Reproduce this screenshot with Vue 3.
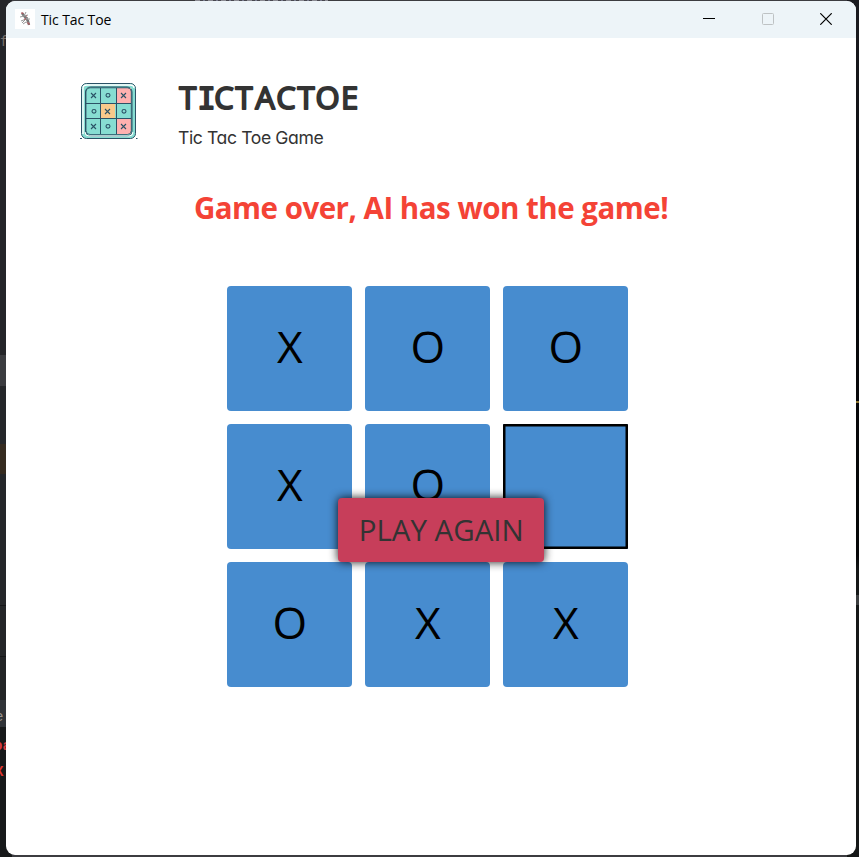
<script setup>
const cells = ['X', 'O', 'O', 'X', 'O', '', 'O', 'X', 'X']
const editorBands = [
  { h: 355, c: '#242529' }, { h: 31, c: '#3b3c40' }, { h: 58, c: '#25272a' },
  { h: 30, c: '#352b20' }, { h: 131, c: '#25272a' }, { h: 1, c: '#151618' },
  { h: 50, c: '#242628' }, { h: 1, c: '#151618' }, { h: 43, c: '#222426' },
  { h: 27, c: '#303338' }, { h: 130, c: '#17191a' },
]
const tiles = [
  { x: 17, y: 18, c: '#87ddd2', m: 'x' }, { x: 31, y: 18, c: '#87ddd2', m: 'o' }, { x: 47, y: 18, c: '#ffb1b0', m: 'x' },
  { x: 17, y: 34, c: '#87ddd2', m: 'o' }, { x: 31, y: 34, c: '#f9c98b', m: 'x' }, { x: 47, y: 34, c: '#87ddd2', m: 'o' },
  { x: 17, y: 49, c: '#87ddd2', m: 'x' }, { x: 31, y: 49, c: '#87ddd2', m: 'o' }, { x: 47, y: 49, c: '#ffb1b0', m: 'x' },
]
</script>

<template>
  <div class="desktop">
    <div class="editor">
      <div v-for="(b, i) in editorBands" :key="i" :style="{ height: b.h + 'px', background: b.c }"></div>
      <span class="code f">f</span>
      <span class="code e">e</span>
      <span class="code a">oa</span>
      <span class="code x">X</span>
    </div>
    <div class="editor-right">
      <i class="scroll"></i>
      <i class="squiggle"></i>
    </div>
    <i class="code-sliver"></i>
    <div class="window">
      <header class="titlebar">
        <svg class="app-icon" width="20" height="20" viewBox="0 0 20 20">
          <rect width="20" height="20" fill="#fff" />
          <path d="M7 4l2 3 2 2 2 3 1 4" stroke="#777" stroke-width="2.4" fill="none" />
          <path d="M5 8l4-1 4-1M6 12l5-2 4 0M8 15l3-2 3 1M11 3l-2 4M7 14l6-6" stroke="#999" stroke-width="1" fill="none" />
          <path d="M6 4h2v1M9 10h2M12 14h2v2M11 7h1" stroke="#b5555a" stroke-width="1" fill="none" />
        </svg>
        <span class="caption">Tic Tac Toe</span>
        <div class="controls">
          <svg width="12" height="12" viewBox="0 0 12 12"><path d="M0 5.5h12" stroke="#000" /></svg>
          <svg width="12" height="12" viewBox="0 0 12 12"><rect x=".5" y=".5" width="11" height="11" rx="1" fill="none" stroke="#bec2c4" /></svg>
          <svg width="12" height="12" viewBox="0 0 12 12"><path d="M.3.3l11.4 11.4M11.7.3L.3 11.7" stroke="#000" stroke-width="1.2" /></svg>
        </div>
      </header>

      <section class="brand">
        <svg class="logo" width="58" height="58" viewBox="10 12 58 58">
          <path d="M10 68.5h2M66 68.5h1.5" stroke="#2b5266" />
          <rect x="11.5" y="13.5" width="54" height="55" rx="5" fill="#87ddd2" stroke="#2b5266" />
          <path d="M13 64V18q0-3 4-3h43q4 0 4 3" fill="none" stroke="#fff" stroke-width="1.4" />
          <rect x="15.5" y="17" width="46.5" height="49" rx="5" fill="#87ddd2" stroke="#2b5266" />
          <path d="M15 62q0 4 4 4h40q4 0 4-4" fill="none" stroke="#fff" />
          <g v-for="(t, i) in tiles" :key="i" :transform="`translate(${t.x} ${t.y})`">
            <rect width="14" height="15" :fill="t.c" />
            <path v-if="t.m === 'x'" d="M4 5l5 5M9 5l-5 5" stroke="#2b5266" stroke-width="1.1" />
            <ellipse v-else cx="7" cy="7.3" rx="2" ry="1.8" fill="none" stroke="#2b5266" stroke-width="1.1" />
          </g>
          <path d="M30.5 18v46M46.5 18v46M16 33.5h45M16 48.5h45" stroke="#2b5266" />
          <rect x="16" y="17.8" width="45.3" height="46.7" rx="4" fill="none" stroke="#2b5266" stroke-width=".8" />
        </svg>
        <div>
          <h1>
            <svg width="184" height="34" viewBox="0 0 184 34">
              <text x="9.7 28.6 46 66 87 108 128 149.5 171.5" y="27" text-anchor="middle">T<tspan class="serifed">I</tspan>CTACTOE</text>
            </svg>
          </h1>
          <p>Tic Tac Toe Game</p>
        </div>
      </section>

      <div class="status"><span>Game over, AI has won the game!</span></div>

      <main class="board">
        <button v-for="(cell, i) in cells" :key="i" class="cell" :class="{ focused: i === 5 }">{{ cell }}</button>
        <button class="again"><span>PLAY AGAIN</span></button>
      </main>
    </div>
  </div>
</template>

<style>
body { overflow: hidden; }
</style>

<style scoped>
* { box-sizing: border-box; }
.desktop {
  position: relative;
  width: 859px;
  height: 857px;
  padding: 1px 3px 2px 6px;
  background: #3c3c40;
  overflow: hidden;
  font-family: "Segoe UI", "Open Sans", sans-serif;
}
.editor { position: absolute; left: 0; top: 0; width: 12px; height: 857px; }
.editor-right { position: absolute; right: 0; top: 0; width: 12px; height: 857px; background: linear-gradient(#1b1b20, #08090b 250px, #050607 555px, #151717 570px); }
.code { position: absolute; font: 14px/16px "Liberation Mono", monospace; }
.f { left: 0; top: 34px; color: #77706b; }
.e { left: -5px; top: 709px; color: #9a938d; }
.a { left: -6px; top: 738px; color: #d63b42; font-weight: bold; }
.x { left: -5px; top: 764px; color: #e0352d; font-weight: bold; }
.scroll { position: absolute; right: 0; top: 595px; width: 3px; height: 10px; background: #3b3d3f; }
.squiggle { position: absolute; right: 0; top: 401px; width: 3px; height: 2px; background: #8b7430; }
.code-sliver {
  position: absolute;
  left: 195px;
  top: 0;
  width: 133px;
  height: 1px;
  background: repeating-linear-gradient(90deg, #8a8a92 0 5px, #48474f 5px 8px, #777a8c 8px 10px, #48474f 10px 13px);
}
.window {
  position: relative;
  width: 850px;
  height: 854px;
  border-radius: 9px;
  background: #fff;
  overflow: hidden;
}
.titlebar {
  display: flex;
  align-items: center;
  height: 37px;
  padding: 0 24px 1px 9px;
  background: #edf4f8;
}
.caption { margin-left: 6px; font-size: 14px; letter-spacing: -0.1px; color: #000; }
.controls { display: flex; gap: 47px; margin-left: auto; }
.controls svg { display: block; }
.controls svg:nth-child(2) { margin-right: -1px; }
.brand { display: flex; gap: 40px; height: 150px; padding: 44px 0 0 74px; }
h1 { display: flex; margin: 0; }
h1 text {
  font: 400 31px "Open Sans", sans-serif;
  fill: #333;
  stroke: #333;
  stroke-width: 1.9px;
  stroke-linejoin: round;
}
h1 .serifed { font-family: "DejaVu Sans Mono", monospace; font-size: 30px; }
p {
  margin: 10px 0 0;
  font: 17.6px/24px "Comic Sans MS", Inter, sans-serif;
  font-feature-settings: "cv11";
  letter-spacing: -0.4px;
  color: #333;
}
.status {
  display: flex;
  justify-content: center;
  height: 97.5px;
  font-size: 29.5px;
  line-height: 40px;
  font-weight: 700;
  letter-spacing: -0.5px;
  color: #f44336;
  white-space: nowrap;
}
.board {
  position: relative;
  display: grid;
  grid-template-columns: repeat(3, 125px);
  grid-auto-rows: 125px;
  gap: 13px;
  margin-left: 221.25px;
  width: 401px;
}
.cell {
  padding: 0 0 3px;
  border: 0;
  border-radius: 4px;
  background: #478ccf;
  color: #000;
  font: 44.5px/1 "Segoe UI", "Open Sans", sans-serif;
}
.focused { border-radius: 1px; box-shadow: inset 0 0 0 2.5px #000; }
.again {
  position: absolute;
  left: 111px;
  top: 212.5px;
  width: 206px;
  height: 64px;
  padding: 0;
  border: 0;
  border-radius: 4px;
  background: #c73e5a;
  box-shadow: 0 0 10px rgba(0, 0, 0, 0.9);
  color: #333;
  font: 29.5px/1 "Segoe UI", "Open Sans", sans-serif;
  white-space: nowrap;
}
</style>
